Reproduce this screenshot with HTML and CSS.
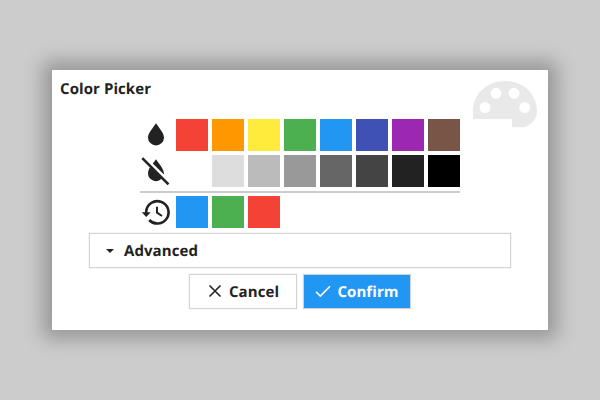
FILE: index.html
```html
<!DOCTYPE html>
<html lang="en">
<head>
<meta charset="utf-8">
<title>Color Picker</title>
<link rel="stylesheet" href="styles.css">
</head>
<body>
<main class="dialog">
  <svg class="palette" viewBox="0 0 64 47" aria-hidden="true">
    <path fill-rule="evenodd" d="M0 38V30C0 13 14 0 32 0S64 13 64 30C64 39 57 46.3 48 46.3H39V38ZM6.5 26.5a5.5 5.5 0 1 0 11 0a5.5 5.5 0 1 0-11 0ZM17.5 12.3a5.5 5.5 0 1 0 11 0a5.5 5.5 0 1 0-11 0ZM35.5 12.3a5.5 5.5 0 1 0 11 0a5.5 5.5 0 1 0-11 0ZM46.2 26.5a5.5 5.5 0 1 0 11 0a5.5 5.5 0 1 0-11 0Z"/>
  </svg>
  <h1 class="title">Color Picker</h1>
  <div class="swatches">
    <div class="row">
      <svg class="icon" viewBox="0 0 32 32"><path d="M16 4.2C13 8.9 8 14 8 18.5a8 7.9 0 0 0 16 0C24 14 19 8.9 16 4.2Z"/></svg>
      <i class="swatch red"></i><i class="swatch orange"></i><i class="swatch yellow"></i><i class="swatch green"></i><i class="swatch blue"></i><i class="swatch indigo"></i><i class="swatch purple"></i><i class="swatch brown"></i>
    </div>
    <div class="row">
      <svg class="icon" viewBox="0 0 32 32"><path d="M16 4.2C15 5.6 13.9 7.2 12.8 8.6L23.9 19.6C24.6 14.5 19 8.9 16 4.2ZM10.2 12.1C8.9 14.2 8 16.4 8 18.5a8 7.9 0 0 0 13.6 5.3Z"/><path class="slash" d="M2.3 3.2L28.5 29.4"/></svg>
      <i class="swatch white"></i><i class="swatch g1"></i><i class="swatch g2"></i><i class="swatch g3"></i><i class="swatch g4"></i><i class="swatch g5"></i><i class="swatch g6"></i><i class="swatch black"></i>
    </div>
    <div class="row recent">
      <svg class="icon" viewBox="0 0 32 32"><path class="ring" d="M6.2 17V15.5A11.2 11.2 0 1 1 9.2 24"/><path d="M1.8 16.2H10.7L6.2 21Z"/><path class="hand" d="M17 10.8V16.6L22 20"/></svg>
      <i class="swatch blue"></i><i class="swatch green"></i><i class="swatch red"></i>
    </div>
  </div>
  <div class="advanced"><svg class="caret" viewBox="0 0 10 6"><path d="M1 1H9L5 5Z"/></svg>Advanced</div>
  <div class="actions">
    <button class="button"><svg class="mark" viewBox="0 0 16 16"><path d="M2.5 2.5L13.5 13.5M13.5 2.5L2.5 13.5"/></svg>Cancel</button>
    <button class="button confirm"><svg class="mark" viewBox="0 0 16 16"><path d="M1 8.8L5.3 13L15 3.2"/></svg>Confirm</button>
  </div>
</main>
</body>
</html>
```
FILE: styles.css
```css
* { box-sizing: border-box; }
body {
  margin: 0;
  height: 400px;
  display: flex;
  align-items: center;
  justify-content: center;
  background: #ccc;
  color: #222;
  font: bold 15px/20px "Open Sans", "Noto Sans", sans-serif;
  letter-spacing: .08px;
  text-rendering: geometricPrecision;
}
.dialog {
  position: relative;
  width: 496px;
  height: 260px;
  padding: 8px;
  background: #fff;
  box-shadow: 0 0 18px 9px rgba(0, 0, 0, .26);
  display: flex;
  flex-direction: column;
  align-items: center;
}
.palette {
  position: absolute;
  right: 11px;
  top: 11px;
  width: 64px;
  height: 47px;
  fill: #e9e9e9;
}
.title {
  align-self: stretch;
  height: 41px;
  margin: 0;
  font-size: 15px;
  line-height: 22px;
}
.swatches {
  width: 320px;
  display: flex;
  flex-direction: column;
  gap: 4px;
}
.row { display: flex; gap: 4px; }
.recent { border-top: 2px solid #ccc; padding-top: 3px; }
.icon { width: 32px; height: 32px; fill: #222; }
.slash, .ring, .hand { fill: none; stroke: #222; }
.slash { stroke-width: 2.6; }
.ring { stroke-width: 2.6; }
.hand { stroke-width: 2; }
.swatch { width: 32px; height: 32px; }
.red { background: #f44336; }
.orange { background: #ff9800; }
.yellow { background: #ffeb3b; }
.green { background: #4caf50; }
.blue { background: #2196f3; }
.indigo { background: #3f51b5; }
.purple { background: #9c27b0; }
.brown { background: #795548; }
.white { background: #fff; }
.g1 { background: #ddd; }
.g2 { background: #bbb; }
.g3 { background: #999; }
.g4 { background: #666; }
.g5 { background: #444; }
.g6 { background: #222; }
.black { background: #000; }
.advanced, .button {
  background: #fff;
  border: 1px solid #d4d4d4;
  box-shadow: 0 0 1px rgba(0, 0, 0, .2);
}
.advanced {
  width: 422px;
  height: 35px;
  margin-top: 5px;
  padding: 1px 0 0 15px;
  display: flex;
  align-items: center;
}
.caret { width: 10px; height: 6px; margin: 0 9px 1px 0; fill: #222; }
.actions { display: flex; gap: 6px; margin-top: 6px; }
.button {
  width: 108px;
  height: 35px;
  padding: 1px 0 0;
  display: flex;
  align-items: center;
  justify-content: center;
  gap: 6px;
  color: inherit;
  font: inherit;
  letter-spacing: inherit;
  text-rendering: inherit;
}
.confirm { background: #2196f3; color: #fff; }
.mark { width: 16px; height: 16px; margin-bottom: 2px; fill: none; stroke: currentColor; stroke-width: 1.6; }
```
